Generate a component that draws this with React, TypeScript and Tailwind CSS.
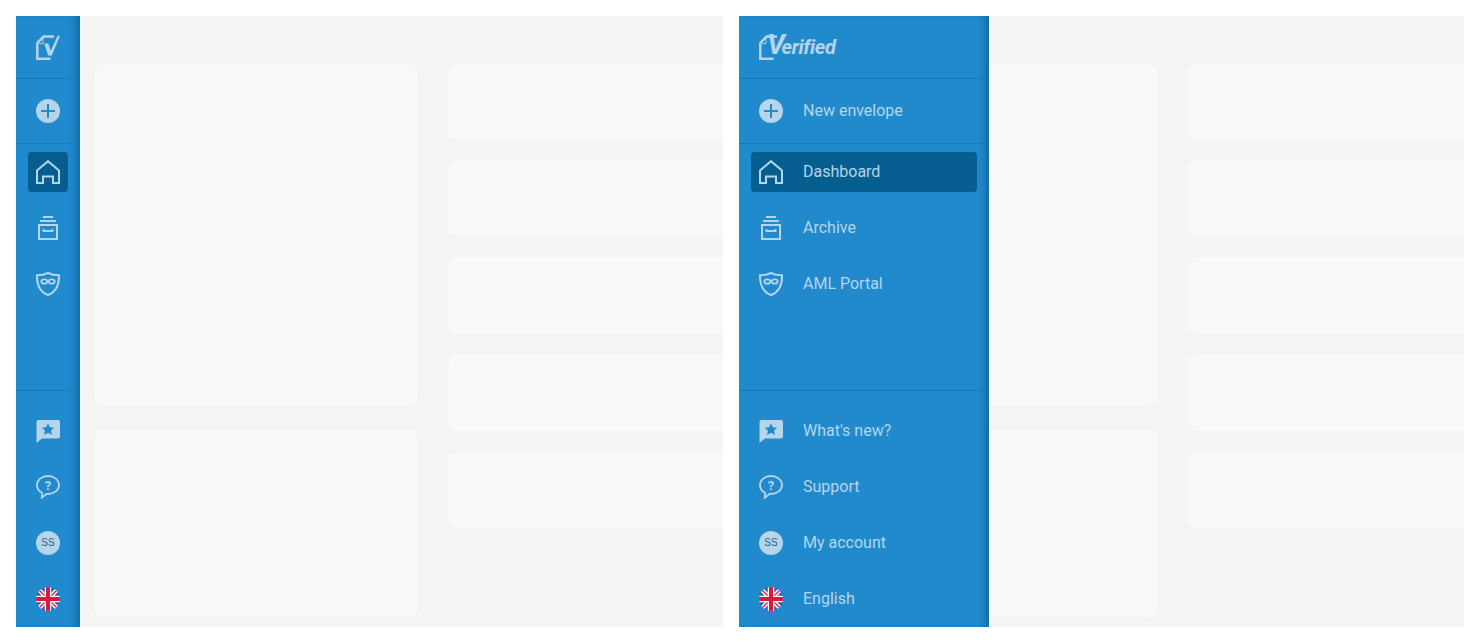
import React from "react";

const ink = "#b5d5ea";
const blue = "#218acd";

function DocOutline() {
  return (
    <>
      <path d="M18 1.6 H7.6 L1.3 7.9 V23.7 H14.5" fill="none" stroke={ink} strokeWidth="2.5" />
      <path d="M3 8.6 H7 V3.5" fill="none" stroke={ink} strokeWidth="0.9" />
    </>
  );
}

function LogoMark() {
  return (
    <svg width="24" height="25" viewBox="0 0 24 25" className="block">
      <DocOutline />
      <path d="M8.2 8.5 L12.2 20.5 H15.8 L24 0.8 H21.6 L14.8 15.8 L12.4 8.5 Z" fill={ink} />
    </svg>
  );
}

function LogoFull() {
  return (
    <div className="relative h-[25px] w-[80px]">
      <svg width="24" height="25" viewBox="0 0 24 25" className="block">
        <DocOutline />
      </svg>
      <div className="absolute top-[-4px] left-[8px] whitespace-nowrap font-['Roboto',sans-serif] text-[20px] leading-[28px] font-bold tracking-[-0.3px] text-[#b5d5ea] italic first-letter:mr-[-3px] first-letter:text-[28px]">
        Verified
      </div>
    </div>
  );
}

function PlusIcon() {
  return (
    <svg width="24" height="24" viewBox="0 0 24 24" className="block">
      <circle cx="12" cy="12" r="12" fill={ink} />
      <path d="M12 5 V19 M5 12 H19" stroke={blue} strokeWidth="2" />
    </svg>
  );
}

function HomeIcon() {
  return (
    <svg width="24" height="24" viewBox="0 0 24 24" className="block">
      <path d="M1 23 V10.5 L12 1.2 L23 10.5 V23 H17 V16.5 H7 V23 Z" fill="none" stroke={ink} strokeWidth="2" />
    </svg>
  );
}

function ArchiveIcon() {
  return (
    <svg width="24" height="24" viewBox="0 0 24 24" className="block">
      <path d="M7 1 H17 M4 5 H20" fill="none" stroke={ink} strokeWidth="2" />
      <rect x="3" y="9" width="18" height="14" fill="none" stroke={ink} strokeWidth="2" />
      <path d="M7.5 13 V15 H16.5 V13" fill="none" stroke={ink} strokeWidth="1.8" />
    </svg>
  );
}

function MaskIcon() {
  return (
    <svg width="24" height="24" viewBox="0 0 24 24" className="block">
      <path
        d="M12 1 C8.5 2.8 4.5 3.3 1 3.3 C0.8 13 4 20 12 23 C20 20 23.2 13 23 3.3 C19.5 3.3 15.5 2.8 12 1 Z"
        fill="none"
        stroke={ink}
        strokeWidth="2"
      />
      <ellipse cx="8.3" cy="9.5" rx="3" ry="2.2" fill="none" stroke={ink} strokeWidth="1.8" />
      <ellipse cx="15.7" cy="9.5" rx="3" ry="2.2" fill="none" stroke={ink} strokeWidth="1.8" />
    </svg>
  );
}

function NewsIcon() {
  return (
    <svg width="24" height="24" viewBox="0 -1 24 24" className="block">
      <path
        d="M2 0 H22 A2 2 0 0 1 24 2 V16.5 A2 2 0 0 1 22 18.5 H6 L0.5 23 V2 A2 2 0 0 1 2 0 Z"
        fill={ink}
      />
      <path
        d="M12 3.2 L13.9 7.2 L18.2 7.7 L15.1 10.6 L15.9 14.9 L12 12.8 L8.1 14.9 L8.9 10.6 L5.8 7.7 L10.1 7.2 Z"
        fill={blue}
      />
    </svg>
  );
}

function SupportIcon() {
  return (
    <svg width="24" height="24" viewBox="0 0 24 24" className="block">
      <path
        d="M12 1 C5.8 1 1 4.9 1 10 C1 13.8 3.6 16.7 6.3 18 L5.8 22.6 L10.5 19 C11 19 11.5 19 12 19 C18.2 19 23 15.1 23 10 C23 4.9 18.2 1 12 1 Z"
        fill="none"
        stroke={ink}
        strokeWidth="1.8"
      />
      <text x="12" y="14.6" textAnchor="middle" fontFamily="Roboto, sans-serif" fontWeight="700" fontSize="13" fill={ink}>
        ?
      </text>
    </svg>
  );
}

function AvatarIcon() {
  return (
    <div className="flex h-6 w-6 items-center justify-center rounded-full bg-[#b5d5ea] font-['Liberation_Sans',sans-serif] text-[10px] leading-none text-[#2f6288]">
      SS
    </div>
  );
}

function FlagIcon({ id }: { id: string }) {
  return (
    <svg width="24" height="24" viewBox="0 0 24 24" className="block">
      <defs>
        <clipPath id={id}>
          <circle cx="12" cy="12" r="12" />
        </clipPath>
      </defs>
      <g clipPath={`url(#${id})`}>
        <rect width="24" height="24" fill="#2b5fb8" />
        <path d="M0 0 L24 24 M24 0 L0 24" stroke="#fff" strokeWidth="4.4" />
        <path d="M0 0 L24 24 M24 0 L0 24" stroke="#e0173d" strokeWidth="1.3" />
        <path d="M12 0 V24 M0 12 H24" stroke="#fff" strokeWidth="6.5" />
        <path d="M12 0 V24 M0 12 H24" stroke="#e0173d" strokeWidth="4" />
      </g>
    </svg>
  );
}

function Row({
  icon,
  label,
  expanded,
  active,
}: {
  icon: React.ReactNode;
  label: string;
  expanded: boolean;
  active?: boolean;
}) {
  return (
    <div className={`mx-3 flex h-10 shrink-0 items-center gap-5 rounded px-2 ${active ? "bg-[#065d90]" : ""}`}>
      <div className="h-6 w-6 shrink-0">{icon}</div>
      {expanded && <span className="whitespace-nowrap text-base text-[#b5d5ea]">{label}</span>}
    </div>
  );
}

function Sidebar({ expanded, id }: { expanded: boolean; id: string }) {
  const width = expanded ? "w-[250px]" : "w-16";
  return (
    <aside
      className={`absolute top-0 bottom-0 left-0 z-10 flex flex-col bg-[#218acd] shadow-[inset_-8px_0_8px_-5px_rgba(5,70,115,0.55)] ${width}`}
    >
      <div className="mr-[3px] flex h-[63px] shrink-0 items-center border-b border-[#1a79b8] pl-5">
        {expanded ? <LogoFull /> : <LogoMark />}
      </div>
      <div className="mr-[3px] flex h-[65px] shrink-0 items-center border-b border-[#1a79b8]">
        <Row icon={<PlusIcon />} label="New envelope" expanded={expanded} />
      </div>
      <nav className="flex flex-1 flex-col gap-4 pt-2">
        <Row icon={<HomeIcon />} label="Dashboard" expanded={expanded} active />
        <Row icon={<ArchiveIcon />} label="Archive" expanded={expanded} />
        <Row icon={<MaskIcon />} label="AML Portal" expanded={expanded} />
      </nav>
      <div className="mr-[3px] flex h-[237px] shrink-0 flex-col gap-4 border-t border-[#1a79b8] pt-5">
        <Row icon={<NewsIcon />} label="What's new?" expanded={expanded} />
        <Row icon={<SupportIcon />} label="Support" expanded={expanded} />
        <Row icon={<AvatarIcon />} label="My account" expanded={expanded} />
        <Row icon={<FlagIcon id={id} />} label="English" expanded={expanded} />
      </div>
    </aside>
  );
}

function Panel({ expanded, id, className }: { expanded: boolean; id: string; className: string }) {
  return (
    <section className={`relative h-full overflow-hidden bg-[#f4f4f4] ${className}`}>
      <Sidebar expanded={expanded} id={id} />
      <div className={`flex gap-[30px] pt-12 ${expanded ? "pl-[95px]" : "pl-[78px]"}`}>
        <div className="flex w-[324px] shrink-0 flex-col gap-6">
          <div className="h-[341px] rounded-[10px] bg-[#f9f9f9]" />
          <div className="h-[188px] rounded-[10px] bg-[#f9f9f9]" />
        </div>
        <div className="flex w-[600px] shrink-0 flex-col">
          <div className="h-[76px] rounded-[10px] bg-[#f9f9f9]" />
          <div className="mt-5 h-[76px] rounded-[10px] bg-[#f9f9f9]" />
          <div className="mt-[21px] h-[76px] rounded-[10px] bg-[#f9f9f9]" />
          <div className="mt-[22px] h-[76px] rounded-[10px] bg-[#f9f9f9]" />
          <div className="mt-[21px] h-[76px] rounded-[10px] bg-[#f9f9f9]" />
        </div>
      </div>
    </section>
  );
}

export default function App() {
  return (
    <div className="flex h-[643px] w-[1480px] gap-4 overflow-hidden bg-white p-4 font-['Roboto',sans-serif]">
      <Panel expanded={false} id="flag-a" className="w-[707px] shrink-0" />
      <Panel expanded id="flag-b" className="w-[725px] shrink-0" />
    </div>
  );
}
